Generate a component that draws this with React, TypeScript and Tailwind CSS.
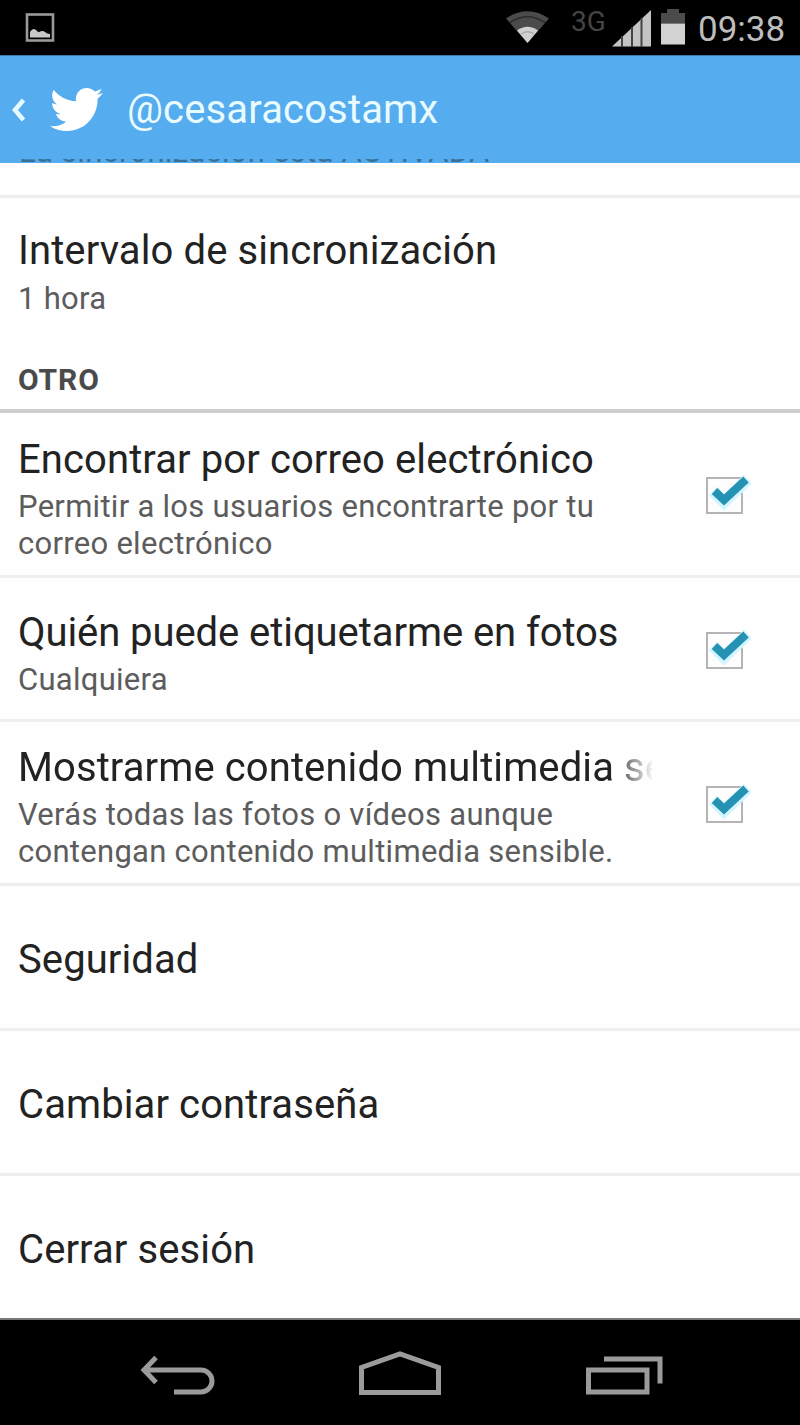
import { FaTwitter } from "react-icons/fa";

const settings = [
    {
        title: "Encontrar por correo electrónico",
        lines: ["Permitir a los usuarios encontrarte por tu", "correo electrónico"],
        row: "h-[165px]",
        titleClass: "tracking-[0.1px]",
    },
    {
        title: "Quién puede etiquetarme en fotos",
        lines: ["Cualquiera"],
        row: "h-[144px]",
        titleClass: "tracking-[-0.07px]",
    },
    {
        title: "Mostrarme contenido multimedia sensible",
        lines: ["Verás todas las fotos o vídeos aunque", "contengan contenido multimedia sensible."],
        row: "h-[164px]",
        titleClass:
            "tracking-[0.1px] [mask-image:linear-gradient(to_right,black_592px,transparent_636px)]",
    },
];

const links = ["Seguridad", "Cambiar contraseña", "Cerrar sesión"];

function StatusBar() {
    return (
        <div className="h-[55px] shrink-0 bg-black flex items-center justify-between pl-[25px] pr-[14px]">
            <svg width="30" height="30" viewBox="0 0 30 30" className="mt-px">
                <rect x="2" y="1.5" width="26" height="26" fill="none" stroke="#9a9a9a" strokeWidth="2.6" />
                <path d="M5 24.500V19q3-5 6-2t3 2q4-2 6 0t5 2v3.500z" fill="#c8c8c8" />
            </svg>
            <div className="flex items-center">
                <svg width="180" height="40" viewBox="506 8 180 40">
                    <path d="M506 18.500Q527.500 4 549 18.500L527.500 43z" fill="#4b4b4b" />
                    <path d="M510 22.500Q527.500 11 545 22.500" fill="none" stroke="#2c2c2c" strokeWidth="1.500" />
                    <path d="M517 30.500Q527.500 23 538 30.500L527.500 43z" fill="#d0d0d0" />
                    <path d="M521 34Q527.500 29.500 534 34" fill="none" stroke="#999" strokeWidth="1" />
                    <text x="571" y="31" fontSize="28" fill="#444" fontFamily="Roboto, sans-serif">3G</text>
                    <path d="M612 46.500L651 10V46.500z" fill="#c4c4c4" />
                    <path d="M622 36V47M632 27V47M641.500 18V47" stroke="#444" strokeWidth="2" />
                    <path d="M661 13h6v-4h12v4h6v10.500h-24z" fill="#4b4b4b" />
                    <path d="M661 23.500h24v21h-24z" fill="#d2d2d2" />
                </svg>
                <span className="ml-3 pt-1 text-[35px] leading-none text-[#bdbdbd] w-[88px] whitespace-nowrap">09:38</span>
            </div>
        </div>
    );
}

function Header() {
    return (
        <div className="h-[108px] shrink-0 bg-[#55acee] flex flex-col border-t border-[#3c78a8]">
            <div className="h-[103px] shrink-0 flex items-center pt-1">
                <svg width="16" height="24" viewBox="0 0 16 24" className="ml-[11px]">
                    <path d="M12.500 2L4 12l8.500 10" fill="none" stroke="#e6fbff" strokeWidth="4.500" />
                </svg>
                <FaTwitter className="ml-[23px] text-[53px] text-white" />
                <span className="ml-[24px] text-[40px] tracking-[0.15px] leading-none text-[#e8fbff]">@cesaracostamx</span>
            </div>
            {/* row scrolled under the header, only its last pixels stick out */}
            <div className="h-[4px] overflow-hidden flex items-end pl-[19px] text-[31px] tracking-[0.27px] text-[#3a7096]">
                <span className="leading-[22px]">La sincronización está ACTIVADA</span>
            </div>
        </div>
    );
}

function Check() {
    return (
        <svg width="48" height="44" viewBox="0 0 48 44" className="shrink-0 mt-[2px]">
            <rect x="4" y="5" width="35" height="35" fill="#fdfdfd" stroke="#b5b3b6" strokeWidth="2" />
            <path d="M10 18l11 11L45 6" fill="none" stroke="#d3f5ff" strokeWidth="12" />
            <path d="M11.500 18L21 27 43 6.500" fill="none" stroke="#2592b4" strokeWidth="8" />
        </svg>
    );
}

function Title({ children, className = "tracking-[0.1px]" }) {
    return (
        <div className={`text-[40px] leading-[48px] text-[#222] whitespace-nowrap overflow-hidden w-[634px] ${className}`}>
            {children}
        </div>
    );
}

export default function App() {
    return (
        <div className="w-[800px] h-[1425px] bg-[#fefefe] flex flex-col overflow-hidden font-['Roboto',sans-serif]">
            <StatusBar />
            <Header />
            <div className="h-[35px] shrink-0 border-b-[3px] border-[#eeeeee]" />

            <div className="h-[211px] shrink-0 pl-[18px] pt-[29px]">
                <Title>Intervalo de sincronización</Title>
                <div className="text-[31px] leading-[37px] mt-[5px] tracking-[0.28px] text-[#5c5c5c]">1 hora</div>
                <div className="text-[30px] leading-[36px] mt-[45px] tracking-[0.9px] font-bold text-[#4a4a4a]">OTRO</div>
            </div>
            <div className="h-[4px] shrink-0 bg-[#cdcdcd]" />

            {settings.map((s) => (
                <div
                    key={s.title}
                    className={`${s.row} shrink-0 flex items-center pl-[18px] border-b-[3px] border-[#eeeeee]`}
                >
                    <div className="w-[685px] pt-[9px]">
                        <Title className={s.titleClass}>{s.title}</Title>
                        <div className="text-[31px] leading-[37px] mt-[4px] tracking-[0.28px] text-[#5c5c5c] whitespace-nowrap">
                            {s.lines.map((line) => (
                                <div key={line}>{line}</div>
                            ))}
                        </div>
                    </div>
                    <Check />
                </div>
            ))}

            {links.map((link, i) => (
                <div
                    key={link}
                    className={`shrink-0 flex items-center pl-[18px] pt-[6px] border-[#eeeeee] ${
                        i < links.length - 1 ? "h-[145px] border-b-[3px]" : "h-[142px]"
                    }`}
                >
                    <Title>{link}</Title>
                </div>
            ))}

            <div className="flex-1 bg-black border-t-2 border-[#777]">
                <svg width="800" height="105" viewBox="0 1319.5 800 105" fill="none" stroke="#9b9b9b" strokeWidth="5">
                    <path d="M174 1391.500h27a11 11 0 0 0 0-22H144M156 1357l-12 12.500L156 1382" />
                    <path d="M361.500 1392v-25l38.500-13.500 38.500 13.500v25z" />
                    <path d="M588.500 1369.500h58.500v22h-58.500zM604 1358.500h56V1383" />
                </svg>
            </div>
        </div>
    );
}
